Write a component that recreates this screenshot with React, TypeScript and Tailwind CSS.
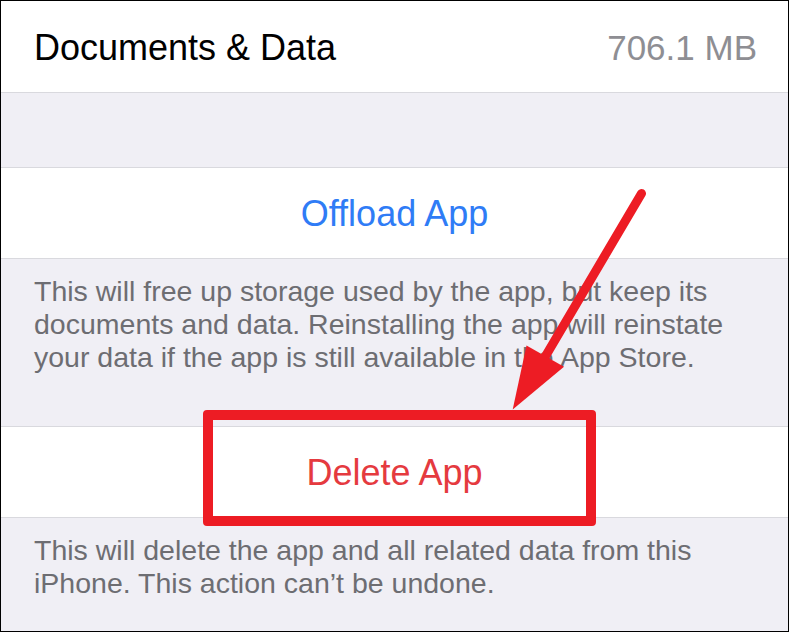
import React from 'react';

const SEP = 'border-[#d9d9de]';

export default function App() {
  return (
    <div className="w-[789px] h-[632px] relative overflow-hidden border border-black bg-[#f0eff5] font-['Liberation_Sans',Arial,sans-serif]">
      <div className={`h-[92px] bg-white border-b ${SEP} flex items-center justify-between pl-[33px] pr-[31px] pt-[2px]`}>
        <span className="text-[36px] leading-[1.2] text-black">Documents &amp; Data</span>
        <span className="text-[35px] leading-[1.2] text-[#8e8e93]">706.1 MB</span>
      </div>

      <div className="h-[74px]" />

      <div className={`h-[92px] bg-white border-y ${SEP} flex items-center justify-center pt-[2px]`}>
        <span className="text-[36px] leading-[1.2] text-[#2f7cf6]">Offload App</span>
      </div>

      <div className="h-[167px] pt-4 pl-[33px] text-[28.5px] leading-[33px] text-[#6d6d72] whitespace-nowrap">
        <p>This will free up storage used by the app, but keep its</p>
        <p>documents and data. Reinstalling the app will reinstate</p>
        <p>your data if the app is still available in the App Store.</p>
      </div>

      <div className={`h-[92px] bg-white border-y ${SEP} flex items-center justify-center pt-[2px]`}>
        <span className="text-[36px] leading-[1.2] text-[#e53a3f]">Delete App</span>
      </div>

      <div className="pt-4 pl-[33px] text-[28.5px] leading-[33px] text-[#6d6d72] whitespace-nowrap">
        <p>This will delete the app and all related data from this</p>
        <p>iPhone. This action can’t be undone.</p>
      </div>

      {/* annotation: box around Delete App */}
      <div className="absolute left-[202px] top-[409px] w-[393px] h-[116px] border-[10px] border-[#ed1c24] rounded-[4px]" />

      {/* annotation: arrow */}
      <svg className="absolute inset-0 pointer-events-none" width="787" height="630" viewBox="0 0 787 630">
        <line x1="640.5" y1="192.5" x2="544" y2="356" stroke="#ed1c24" strokeWidth="9" strokeLinecap="round" />
        <polygon points="511.7,408.5 525.5,344.5 563,365.7" fill="#ed1c24" />
      </svg>
    </div>
  );
}
